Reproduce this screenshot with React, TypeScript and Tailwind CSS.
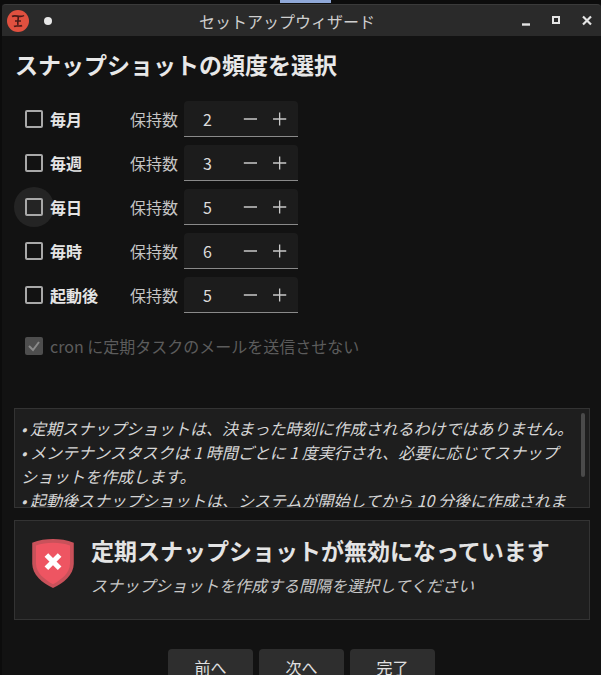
const font = { fontFamily: '"Noto Sans CJK JP", "Noto Sans", sans-serif' };

function Row({ label, value, hover }: { label: string; value: number; hover?: boolean }) {
  return (
    <div className="flex h-9 items-center">
      <div className="relative flex w-[116px] items-center pl-[11px]">
        {hover && <div className="absolute left-[0px] top-[-8px] h-10 w-10 rounded-full bg-[#242424]" />}
        <div className="relative h-[18px] w-[18px] rounded-[2px] border-2 border-[#a8a8a8]" />
        <span className="relative ml-[7px] text-[16px] font-bold text-[#e4e4e4]">{label}</span>
      </div>
      <span className="w-[54px] text-[16px] text-[#c4c4c4]">保持数</span>
      <div className="flex h-9 w-[114px] items-center rounded-t-[4px] border-b border-[#8a8a8a] bg-[#1c1c1c]">
        <span className="w-[46px] pl-[19px] text-[16px] text-[#dcdcdc]">{value}</span>
        <svg width="60" height="20" viewBox="0 0 60 20" className="ml-[13px]" stroke="#c8c8c8" strokeWidth="1.4">
          <path d="M3 10H17M34 10H48M41 3V17" />
        </svg>
      </div>
    </div>
  );
}

export default function App() {
  return (
    <div className="flex h-[675px] w-[601px] flex-col overflow-hidden bg-[#0c0c0c]" style={font}>
      <div className="relative h-1 shrink-0">
        <div className="absolute left-[280px] top-0 h-[3px] w-[51px] bg-[#8fa8d8]" />
      </div>
      <div className="ml-[2px] flex min-h-0 flex-1 flex-col bg-[#121212]">
        <header className="flex h-8 shrink-0 items-center rounded-t-[4px] border-t border-[#3a3a3a] bg-[#2a2a2a]">
          <svg width="22" height="22" viewBox="0 0 22 22" className="ml-[5px]">
            <circle cx="11" cy="11" r="11" fill="#e0503f" />
            <path d="M5 6.5C8 4.5 14 8 17 5.5M11 6C12 9 10 12 11 15M7 16.5C9 15 13 17 15 15.5M8 11H14" stroke="#4a1a18" strokeWidth="1.6" fill="none" />
          </svg>
          <div className="ml-[15px] h-2 w-2 rounded-full bg-[#e8e8e8]" />
          <div className="flex-1 text-center text-[16px] text-[#cfcfcf]">セットアップウィザード</div>
          <svg width="70" height="14" viewBox="0 0 70 14" className="mr-[9px]" fill="none" stroke="#e4e4e4">
            <path d="M0 10.5H8" strokeWidth="2.4" />
            <rect x="31" y="3" width="6" height="6" strokeWidth="2" />
            <path d="M61 2.5L69 10.5M69 2.5L61 10.5" strokeWidth="2.2" />
          </svg>
        </header>
        <main className="flex min-h-0 flex-1 flex-col px-3">
          <h1 className="mt-[12px] ml-[1px] h-8 text-[23px] leading-8 font-bold text-[#e8e8e8]">スナップショットの頻度を選択</h1>
          <div className="mt-[21px] flex flex-col gap-2">
            <Row label="毎月" value={2} />
            <Row label="毎週" value={3} />
            <Row label="毎日" value={5} hover />
            <Row label="毎時" value={6} />
            <Row label="起動後" value={5} />
          </div>
          <div className="mt-[21px] flex h-6 items-center pl-[11px]">
            <div className="flex h-[18px] w-[18px] items-center justify-center rounded-[2px] bg-[#4e4e4e]">
              <svg width="14" height="14" viewBox="0 0 14 14" fill="none" stroke="#8a8a8a" strokeWidth="2">
                <path d="M2 7L6 11L12 3" />
              </svg>
            </div>
            <span className="ml-[7px] text-[16px] text-[#5c5c5c]">cron に定期タスクのメールを送信させない</span>
          </div>
          <div className="relative mt-[50px] h-[100px] w-[576px] shrink-0 overflow-hidden border border-[#333333] bg-[#1e1e1e] pt-[7px] pr-[13px] pl-[6px] text-[16px] leading-6 text-[#d6d6d6] italic">
            <p>• 定期スナップショットは、決まった時刻に作成されるわけではありません。</p>
            <p>• メンテナンスタスクは 1 時間ごとに 1 度実行され、必要に応じてスナップ<br />ショットを作成します。</p>
            <p>• 起動後スナップショットは、システムが開始してから 10 分後に作成されます。</p>
            <div className="absolute top-[4px] right-[4px] h-[64px] w-[4px] rounded-full bg-[#4a4a4a]" />
          </div>
          <div className="mt-[12px] flex h-[100px] w-[576px] shrink-0 items-start border border-[#333333] bg-[#1e1e1e]">
            <svg width="44" height="51" viewBox="0 0 46 54" className="mt-[17px] ml-[16px]">
              <path d="M23 1C30 1 38 2 45 5V27C45 39 34 48 23 53C12 48 1 39 1 27V5C8 2 16 1 23 1Z" fill="#c9515a" />
              <path d="M23 5C29 5 36 6 41 8V27C41 37 32 44 23 49C14 44 5 37 5 27V8C10 6 17 5 23 5Z" fill="#ee5562" />
              <path d="M16 18L30 32M30 18L16 32" stroke="#ffffff" strokeWidth="5.5" />
            </svg>
            <div className="ml-[16px]">
              <div className="mt-[13px] text-[23px] leading-8 font-bold text-[#e4e4e4]">定期スナップショットが無効になっています</div>
              <div className="mt-[7px] text-[16px] leading-6 text-[#c8c8c8] italic">スナップショットを作成する間隔を選択してください</div>
            </div>
          </div>
          <div className="mt-[29px] flex shrink-0 gap-[6px] pl-[154px]">
            {["前へ", "次へ", "完了"].map((t) => (
              <button key={t} className="flex h-9 w-[85px] items-center justify-center rounded-[4px] bg-[#2e2e2e] text-[16px] text-[#e0e0e0]">{t}</button>
            ))}
          </div>
        </main>
      </div>
    </div>
  );
}
